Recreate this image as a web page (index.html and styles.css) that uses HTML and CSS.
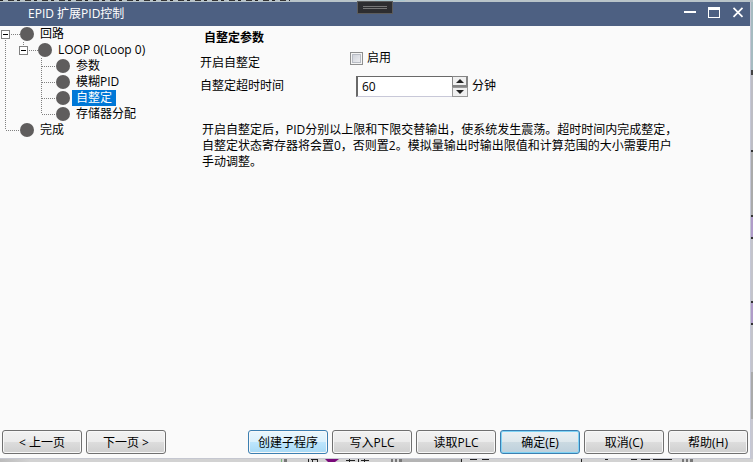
FILE: index.html
```html
<!DOCTYPE html>
<html lang="zh-CN">

<head>
  <meta charset="utf-8">
  <meta name="viewport" content="width=device-width">
  <title>EPID 扩展PID控制</title>
  <link rel="stylesheet" href="styles.css">
</head>

<body>
  <div class="backdrop-top"></div>
  <div class="dialog">
    <header class="titlebar">
      <h1>EPID 扩展PID控制</h1>
      <div class="grip"></div>
      <div class="window-buttons">
        <button type="button" aria-label="最小化">
          <svg width="12" height="12" viewBox="0 0 12 12"><path d="M0 4h12v2H0z" fill="#fff"/></svg>
        </button>
        <button type="button" aria-label="最大化">
          <svg width="12" height="12" viewBox="0 0 12 12"><path d="M0 0h12v11H0zM1 3v7h10V3z" fill="#fff" fill-rule="evenodd"/></svg>
        </button>
        <button type="button" aria-label="关闭">
          <svg width="12" height="12" viewBox="0 0 12 12"><path d="M1.5 0.8l9 9M10.5 0.8l-9 9" stroke="#fff" stroke-width="1.7"/></svg>
        </button>
      </div>
    </header>

    <div class="content">
      <nav class="tree">
        <ul>
          <li>
            <div class="node"><button type="button" class="toggle" aria-label="折叠"></button><span class="stem"></span><span class="dot"></span><a href="#loops">回路</a></div>
            <ul>
              <li>
                <div class="node"><button type="button" class="toggle" aria-label="折叠"></button><span class="stem"></span><span class="dot"></span><a href="#loop0">LOOP 0(Loop 0)</a></div>
                <ul>
                  <li><div class="node"><span class="stem leaf"></span><span class="dot"></span><a href="#params">参数</a></div></li>
                  <li><div class="node"><span class="stem leaf"></span><span class="dot"></span><a href="#fuzzy">模糊PID</a></div></li>
                  <li><div class="node"><span class="stem leaf"></span><span class="dot"></span><a href="#tuning" class="selected">自整定</a></div></li>
                  <li><div class="node"><span class="stem leaf"></span><span class="dot"></span><a href="#memory">存储器分配</a></div></li>
                </ul>
              </li>
            </ul>
          </li>
          <li><div class="node"><span class="stem leaf"></span><span class="dot"></span><a href="#done">完成</a></div></li>
        </ul>
      </nav>

      <main class="panel">
        <h2>自整定参数</h2>
        <form class="settings">
          <span class="caption">开启自整定</span>
          <div class="field check">
            <input type="checkbox" id="enable">
            <label for="enable">启用</label>
          </div>
          <label for="timeout">自整定超时时间</label>
          <div class="field">
            <div class="spinner">
              <input type="text" id="timeout" value="60">
              <div class="steps">
                <button type="button" aria-label="增加"><svg width="8" height="4" viewBox="0 0 8 4"><path d="M0 4L4 0l4 4z" fill="#222"/></svg></button>
                <button type="button" aria-label="减少"><svg width="8" height="4" viewBox="0 0 8 4"><path d="M0 0h8L4 4z" fill="#222"/></svg></button>
              </div>
            </div>
            <span>分钟</span>
          </div>
        </form>
        <p>开启自整定后，PID分别以上限和下限交替输出，使系统发生震荡。超时时间内完成整定，<br>自整定状态寄存器将会置0，否则置2。模拟量输出时输出限值和计算范围的大小需要用户<br>手动调整。</p>
      </main>
    </div>

    <footer class="actions">
      <div class="group">
        <button type="button" class="btn">&lt; 上一页</button>
        <button type="button" class="btn">下一页 &gt;</button>
      </div>
      <div class="group">
        <button type="button" class="btn hot">创建子程序</button>
        <button type="button" class="btn">写入PLC</button>
        <button type="button" class="btn">读取PLC</button>
        <button type="button" class="btn default">确定(E)</button>
        <button type="button" class="btn">取消(C)</button>
        <button type="button" class="btn">帮助(H)</button>
      </div>
    </footer>
  </div>
  <div class="backdrop-side"></div>
  <div class="backdrop-bottom">
    <svg width="753" height="3" viewBox="0 0 753 3">
      <path d="M281 0h1v3h-1z" fill="#7ab87a"/>
      <path d="M284 0h3v3h-3zM391 0h2v3h-2zM395 0h2v3h-2zM399 0h3v3h-3zM682 0h2v3h-2zM686 0h2v3h-2zM690 0h3v3h-3z" fill="#777"/>
      <path d="M402 0h60v3h-60z" fill="#b4b4b4"/>
      <path d="M325 0h14l-4 3h-7z" fill="#7a0a7a"/>
      <path d="M308 0h1v3h-1zM311 0h6v1h-6zM312 1h1v2h-1zM317 0h1v3h-1zM346 1h9v1h-9zM349 0h1v3h-1zM358 0h1v3h-1zM361 1h8v1h-8zM364 0h1v3h-1zM461 0h1v3h-1zM470 0h7v1h-7zM482 0h7v1h-7zM581 0h1v3h-1zM605 0h3v1h-3zM631 0h6v1h-6zM641 0h9v1h-9zM653 0h19v1h-19z" fill="#222"/>
    </svg>
  </div>
</body>

</html>
```
FILE: styles.css
```css
* {
  box-sizing: border-box;
}

body {
  margin: 0;
  height: 100vh;
  display: grid;
  grid-template-columns: 1fr 2px;
  grid-template-rows: 2px 1fr 3px;
  overflow: hidden;
  background: #c6c6cb;
  color: #000;
  font: 12px/16px "Open Sans", "Noto Sans CJK SC", sans-serif;
}

button,
input {
  font: inherit;
  color: inherit;
}

ul {
  list-style: none;
  margin: 0;
  padding: 0;
}

/* what shows of the desktop around the dialog */
.backdrop-top {
  grid-column: 1 / -1;
  background:
    repeating-linear-gradient(90deg, #222 0 3px, transparent 3px 8px, #333 8px 14px, transparent 14px 17px) 0 0 / 290px 1px no-repeat,
    linear-gradient(#a9c6cf, #a9c6cf) 375px 0 / 30px 1px no-repeat,
    #b9c4c9;
}

.backdrop-side {
  background: linear-gradient(#a5bbc0 0 68px, #444 68px 73px, #bdbdc4 73px 148px, #333 148px 150px, #aaa 150px 213px, #333 213px 215px, #b09cc8 215px 235px, #333 235px 237px, #c4c4cb 237px 299px, #333 299px 301px, #b09cc8 301px 321px, #333 321px 323px, #c4c4cb 323px 370px, #aaa 370px 417px, #c8c8d0 417px);
}

.backdrop-bottom {
  grid-column: 1 / -1;
  background: linear-gradient(90deg, #bbb, #d2d2d2 30px);
}

.backdrop-bottom svg {
  display: block;
}

.dialog {
  display: flex;
  flex-direction: column;
  border-right: 1px solid #c5c7d6;
  border-bottom: 1px solid #c5c7d0;
  background: #fafafa;
}

.titlebar {
  position: relative;
  display: flex;
  justify-content: space-between;
  height: 24px;
  padding: 0 6px 0 28px;
  background: #4d6082;
  color: #fff;
}

.titlebar h1 {
  margin: 0;
  padding-top: 4px;
  font-size: 12px;
  line-height: 16px;
  font-weight: normal;
}

.grip {
  position: absolute;
  top: -1px;
  left: calc(50% - 18px);
  width: 36px;
  height: 13px;
  border: 1px solid #5c5c5c;
  background:
    linear-gradient(#777, #777) 50% 4px / 24px 1px no-repeat,
    linear-gradient(#777, #777) 50% 6px / 24px 1px no-repeat,
    #2d2d30;
}

.window-buttons {
  display: flex;
  gap: 12px;
  padding-top: 5px;
}

.window-buttons button {
  width: 12px;
  height: 12px;
  padding: 0;
  border: 0;
  background: none;
}

.window-buttons svg {
  display: block;
}

.content {
  flex: 1;
  display: grid;
  grid-template-columns: 200px 1fr;
}

/* tree */
.tree li {
  background: repeating-linear-gradient(#808080 0 1px, transparent 1px 2px) 5px 0 / 1px 100% no-repeat;
}

.tree li:last-child {
  background-size: 1px 8px;
}

.tree > ul > li:first-child {
  background-position: 5px 8px;
}

.tree ul ul {
  margin-left: 18px;
}

.node {
  display: flex;
  align-items: center;
  height: 16px;
  padding-left: 1px;
}

.toggle {
  width: 9px;
  height: 9px;
  padding: 0;
  border: 1px solid #808080;
  background: linear-gradient(#000, #000) center / 5px 1px no-repeat #fff;
}

.stem {
  width: 10px;
  height: 1px;
  background: repeating-linear-gradient(90deg, transparent 0 1px, #808080 1px 2px);
}

.stem.leaf {
  width: 15px;
  margin-left: 4px;
}

.dot {
  width: 14px;
  height: 14px;
  border-radius: 50%;
  background: #5f5d5d;
}

.node a {
  margin-left: 2px;
  padding: 0 4px;
  color: inherit;
  text-decoration: none;
}

.node .selected {
  background: #0078d7;
  color: #fff;
}

/* settings */
.panel h2 {
  margin: 4px 0 0 4px;
  font-size: 12px;
  line-height: 16px;
}

.settings {
  display: grid;
  grid-template-columns: 150px 1fr;
  grid-template-rows: 24px 24px;
  align-items: center;
  margin-top: 4px;
}

.settings .caption {
  padding-top: 2px;
}

.field {
  display: flex;
  align-items: center;
  gap: 4px;
  padding-left: 6px;
}

.field.check {
  padding: 0 0 8px;
}

.field input[type="checkbox"] {
  appearance: none;
  width: 13px;
  height: 13px;
  margin: 0;
  border: 1px solid #8e8f8f;
  background: linear-gradient(135deg, #c8ccd4, #f4f4f6);
  box-shadow: inset 0 0 0 1px #f4f4f4, inset 0 0 0 2px #b8bcc4;
}

.field input[type="checkbox"]:checked {
  background: #4d6082;
}

.spinner {
  display: flex;
  width: 112px;
  height: 21px;
}

.spinner input {
  flex: 1;
  min-width: 0;
  padding: 1px 4px 0;
  border: 1px solid #c8c8d8;
  border-top-color: #696969;
  border-left: 2px solid #696969;
  border-right: 0;
  background: #fff;
}

.steps {
  display: flex;
  flex-direction: column;
  width: 16px;
}

.steps button {
  flex: 1;
  display: flex;
  align-items: center;
  justify-content: center;
  padding: 0;
  border: 1px solid #999;
  background: #f0f0f0;
}

.steps button:first-child {
  border-width: 1px 2px 2px 1px;
  border-color: #858585;
}

.panel p {
  margin: 24px 0 0 2px;
}

/* buttons */
.actions {
  display: flex;
  justify-content: space-between;
  padding: 0 2px 4px;
}

.group {
  display: flex;
  gap: 4px;
}

.btn {
  width: 80px;
  height: 24px;
  padding: 1px 0 0;
  border: 1px solid #707070;
  border-radius: 3px;
  background: linear-gradient(#f2f2f2 0 0, #ebebeb 50%, #dddddd 50%, #cfcfcf);
  box-shadow: inset 0 0 0 1px #f8f8f8;
  white-space: nowrap;
}

.btn.hot {
  border-color: #3c7fb1;
  background: linear-gradient(#eaf6fd, #d9f0fc 50%, #bee6fd 50%, #a7d9f5);
}

.btn.default {
  border-color: #3c7fb1;
  background: linear-gradient(#eaf0f4, #dde7ec 50%, #cbdae2 50%, #bdd0dc);
  box-shadow: inset 0 0 0 1px #7fd3f5;
}
```
